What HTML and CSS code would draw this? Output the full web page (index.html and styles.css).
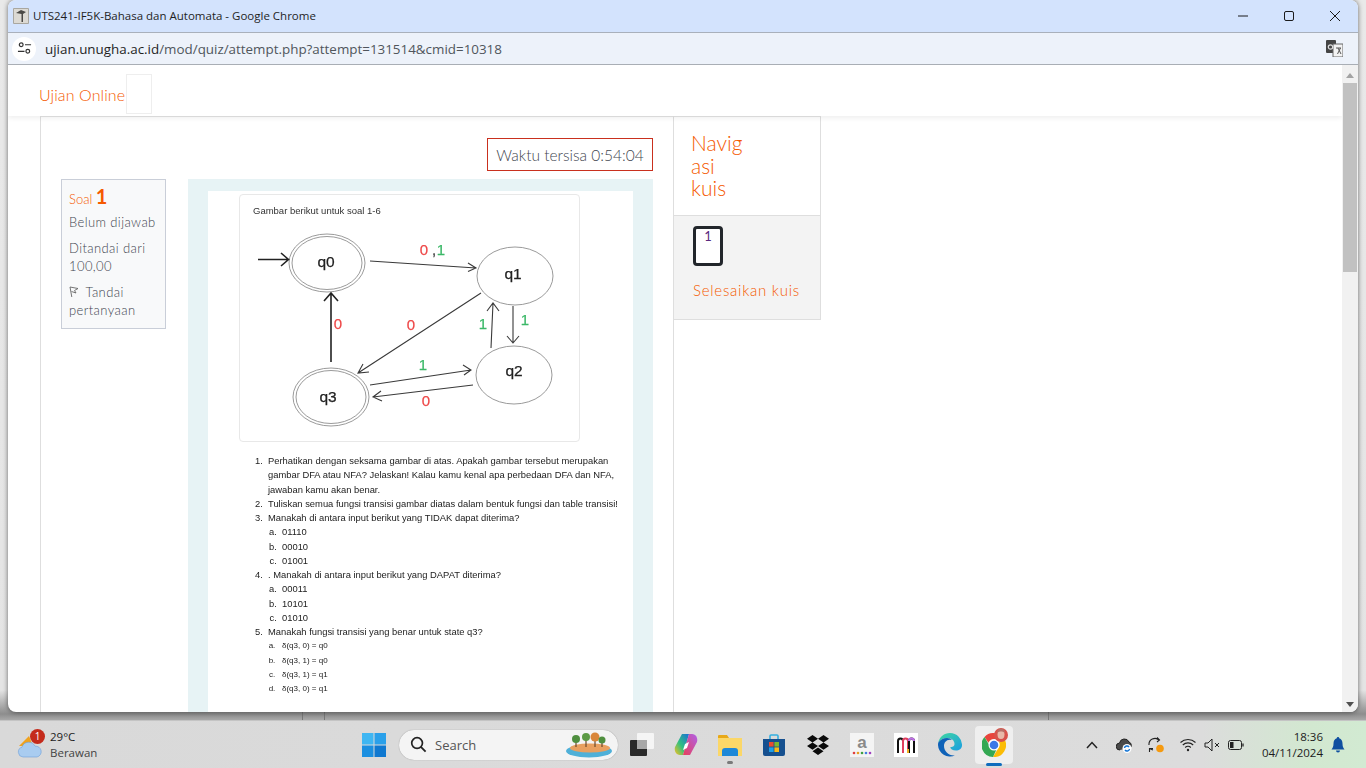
FILE: index.html
```html
<!DOCTYPE html>
<html lang="id">
<head>
<meta charset="utf-8">
<title>UTS241-IF5K-Bahasa dan Automata</title>
<link rel="stylesheet" href="styles.css">
</head>
<body>
<div class="desktop">
  <div class="desk-area">
    <i class="desk-line dl1"></i><i class="desk-line dl2"></i><i class="desk-line dl3"></i>
    <div class="window">
      <div class="titlebar">
        <svg class="favicon" viewBox="0 0 16 16"><rect width="16" height="16" rx="1" fill="#a9a7a0"/><rect x="1" y="1" width="14" height="14" fill="#dcdad4"/><path d="M3 5 8 2l5 2-3 2v8H8.500V6z" fill="#4a4946"/></svg>
        <span class="title-text">UTS241-IF5K-Bahasa dan Automata - Google Chrome</span>
        <div class="win-controls">
          <svg viewBox="0 0 12 12"><path d="M1 6h10" stroke="#1b1b1b" fill="none"/></svg>
          <svg viewBox="0 0 12 12"><rect x="1.500" y="1.500" width="9" height="9" rx="1.500" stroke="#1b1b1b" fill="none"/></svg>
          <svg viewBox="0 0 12 12"><path d="M1 1l10 10M11 1 1 11" stroke="#1b1b1b" fill="none"/></svg>
        </div>
      </div>
      <div class="addressbar">
        <span class="site-info"><svg viewBox="0 0 16 16"><circle cx="4.500" cy="4" r="2" fill="none" stroke="#333" stroke-width="1.300"/><path d="M8.500 4H15M1 11h7" stroke="#333" stroke-width="1.300"/><circle cx="11.500" cy="11" r="2" fill="none" stroke="#333" stroke-width="1.300"/></svg></span>
        <span class="url"><span class="url-host">ujian.unugha.ac.id</span>/mod/quiz/attempt.php?attempt=131514&amp;cmid=10318</span>
        <svg class="translate" viewBox="0 0 17 17"><rect x="0" y="0" width="10" height="13" rx="1" fill="#444"/><rect x="7" y="4" width="10" height="13" fill="#f2f2f2" stroke="#666"/><circle cx="4.500" cy="7" r="2.200" fill="none" stroke="#ddd" stroke-width="1.200"/><path d="M10 8h5M12 8l3 6M14.500 8l-3 6" stroke="#555" stroke-width="1" fill="none"/></svg>
      </div>
      <div class="viewport">
        <div class="page">
          <header class="site-header">
            <span class="brand">Ujian Online</span>
            <span class="brand-box"></span>
          </header>
          <main class="main">
            <section class="region">
              <div class="timer-row"><div class="timer">Waktu tersisa 0:54:04</div></div>
              <div class="question">
                <aside class="qinfo">
                  <div class="qno">Soal <b>1</b></div>
                  <p class="qstate">Belum dijawab</p>
                  <p class="qgrade">Ditandai dari 100,00</p>
                  <p class="qflag"><svg class="flag" viewBox="0 0 10 12"><path d="M1 1l8 1.500L5.500 4.500 7 7 2.500 5.500M1 1l1.800 10" fill="none" stroke="#666" stroke-width="0.900"/></svg> Tandai pertanyaan</p>
                </aside>
                <div class="qcontent">
                  <div class="qimage">
                    <div class="figure-card">
                      <span class="figure-cap">Gambar berikut untuk soal 1-6</span>
                      <svg class="diagram" viewBox="239 194 341 248">
                        <g class="state">
                          <ellipse cx="327" cy="263" rx="38" ry="29"/><ellipse cx="327" cy="263" rx="35" ry="26.500"/>
                          <ellipse cx="515" cy="276" rx="38" ry="29"/>
                          <ellipse cx="514" cy="375" rx="38" ry="29"/>
                          <ellipse cx="331" cy="397" rx="38" ry="29"/><ellipse cx="331" cy="397" rx="35" ry="26.500"/>
                        </g>
                        <g class="edge">
                          <path class="thick" d="M258 259.500h30M281 253l7.500 6.500-7.500 6.500"/>
                          <path d="M370 261l106 7M468 263l8 5-8 3.500"/>
                          <path d="M481 293 358 373M369 372l-11 1 5-9"/>
                          <path d="M513 306v37M507 336l6 7 6-7"/>
                          <path d="M491 348l2-45M487 311l6-8 6 8"/>
                          <path class="thick" d="M331 362v-69M324 301l7-8 7 8"/>
                          <path d="M370 385l101-15M463 365l8 5-7 5"/>
                          <path d="M473 385 373 397M381 391l-8 6 9 4"/>
                        </g>
                        <g class="state-label">
                          <text x="326" y="267">q0</text><text x="513" y="279">q1</text>
                          <text x="514" y="376">q2</text><text x="328" y="402">q3</text>
                        </g>
                        <g class="edge-label">
                          <text class="red" x="424" y="255">0</text><text class="dark" x="434" y="255">,</text><text class="green" x="441" y="255">1</text>
                          <text class="red" x="411" y="330">0</text><text class="red" x="338" y="329">0</text>
                          <text class="green" x="525" y="325">1</text><text class="green" x="483" y="329">1</text>
                          <text class="green" x="423" y="370">1</text><text class="red" x="426" y="406">0</text>
                        </g>
                      </svg>
                    </div>
                    <ol class="qlist">
                      <li>Perhatikan dengan seksama gambar di atas. Apakah gambar tersebut merupakan gambar DFA atau NFA? Jelaskan! Kalau kamu kenal apa perbedaan DFA dan NFA, jawaban kamu akan benar.</li>
                      <li>Tuliskan semua fungsi transisi gambar diatas dalam bentuk fungsi dan table transisi!</li>
                      <li>Manakah di antara input berikut yang TIDAK dapat diterima?
                        <ol class="sublist"><li>01110</li><li>00010</li><li>01001</li></ol></li>
                      <li>. Manakah di antara input berikut yang DAPAT diterima?
                        <ol class="sublist"><li>00011</li><li>10101</li><li>01010</li></ol></li>
                      <li>Manakah fungsi transisi yang benar untuk state q3?
                        <ol class="sublist small"><li>δ(q3, 0) = q0</li><li>δ(q3, 1) = q0</li><li>δ(q3, 1) = q1</li><li>δ(q3, 0) = q1</li></ol></li>
                    </ol>
                  </div>
                </div>
              </div>
            </section>
            <aside class="quiznav">
              <h2 class="nav-head">Navig<br>asi<br>kuis</h2>
              <div class="nav-body">
                <div class="nav-btn">1</div>
                <a class="nav-finish">Selesaikan kuis</a>
              </div>
            </aside>
          </main>
        </div>
        <div class="scrollbar">
          <span class="arrow-up"></span>
          <span class="thumb"></span>
          <span class="arrow-down"></span>
        </div>
      </div>
    </div>
  </div>
  <footer class="taskbar">
    <div class="weather">
      <span class="weather-icon">
        <svg viewBox="0 0 26 24"><path d="M2 11 12 1l4 10z" fill="#f0a21e"/><path d="M6 22a5 5 0 0 1-1-9.800 7 7 0 0 1 13-1 5.500 5.500 0 0 1 2 10.800z" fill="#a9ccf0" stroke="#6f9fd8" stroke-width=".6"/></svg>
        <span class="badge">1</span>
      </span>
      <span class="weather-text"><span class="temp">29°C</span><span class="cond">Berawan</span></span>
    </div>
    <div class="center">
      <svg class="startbtn" viewBox="0 0 24 24"><rect width="11.500" height="11.500" fill="#3fb6f2"/><rect x="12.500" width="11.500" height="11.500" fill="#2aa0ea"/><rect y="12.500" width="11.500" height="11.500" fill="#1b8fe0"/><rect x="12.500" y="12.500" width="11.500" height="11.500" fill="#0f78d0"/></svg>
      <div class="search">
        <svg class="search-glass" viewBox="0 0 18 18"><circle cx="7.500" cy="7.500" r="5.700" fill="none" stroke="#222" stroke-width="1.800"/><path d="M11.500 11.500 16.500 16.500" stroke="#222" stroke-width="2"/></svg>
        <span class="search-text">Search</span>
        <svg class="search-art" viewBox="0 0 46 26"><ellipse cx="23" cy="19" rx="23" ry="6.500" fill="#4fb0d8"/><ellipse cx="24" cy="16" rx="20" ry="4.500" fill="#e8a060"/><path d="M10 15V7M20 15V5M29 15V5M36 15V8" stroke="#6b4a2b" stroke-width="1.200"/><circle cx="10" cy="7" r="4" fill="#4f8f3f"/><circle cx="20" cy="5" r="4" fill="#5c9a45"/><circle cx="29" cy="5" r="4.500" fill="#d9863a"/><circle cx="36" cy="8" r="3.500" fill="#4f8f3f"/></svg>
      </div>
      <div class="apps">
        <span class="app"><svg viewBox="0 0 24 24"><rect x="7" y="0" width="17" height="16" rx="1" fill="#f5f5f5"/><rect x="0" y="7" width="17" height="16" rx="1" fill="#2a2a2a"/><rect x="7" y="7" width="10" height="9" fill="#a8a8a8"/></svg></span>
        <span class="app"><svg viewBox="0 0 24 24"><defs><linearGradient id="cpa" x1="0" y1="1" x2="1" y2="0"><stop offset="0" stop-color="#f8c020"/><stop offset=".45" stop-color="#30c080"/><stop offset="1" stop-color="#1b6fd8"/></linearGradient><linearGradient id="cpb" x1="0" y1="1" x2="1" y2="0"><stop offset="0" stop-color="#e8405a"/><stop offset="1" stop-color="#b060e8"/></linearGradient></defs><path d="M8 1h7l-6 21H6C2 22 0 18 1 14z" fill="url(#cpa)"/><path d="M16 22H9l6-21h3c4 0 6 4 5 8z" fill="url(#cpb)"/><path d="M11 11l4-2-2 6-4 2z" fill="#fff"/></svg></span>
        <span class="app has-dot"><svg viewBox="0 0 24 24"><path d="M0 3a1 1 0 0 1 1-1h8l2 3h13v18H0z" fill="#e8a818"/><rect y="5" width="24" height="18" fill="#fbd768"/><path d="M4 23v-5a3 3 0 0 1 3-3h10a3 3 0 0 1 3 3v5z" fill="#1d88d8"/></svg></span>
        <span class="app"><svg viewBox="0 0 24 24"><path d="M8 7V3a1 1 0 0 1 1-1h6a1 1 0 0 1 1 1v4" fill="none" stroke="#34b0e0" stroke-width="1.600"/><path d="M1 6h22v15a2 2 0 0 1-2 2H3a2 2 0 0 1-2-2z" fill="#16508f"/><rect x="7" y="9" width="4.600" height="4.600" fill="#e84c30"/><rect x="12.400" y="9" width="4.600" height="4.600" fill="#7cb82f"/><rect x="7" y="14.400" width="4.600" height="4.600" fill="#1ea0e8"/><rect x="12.400" y="14.400" width="4.600" height="4.600" fill="#f8b818"/></svg></span>
        <span class="app"><svg viewBox="0 0 24 24"><path d="M6.500 2 12 5.700 6.500 9.400 1 5.700zM17.500 2 23 5.700l-5.500 3.700L12 5.700zM6.500 9.400 12 13.100l-5.500 3.700L1 13.100zM17.500 9.400 23 13.100l-5.500 3.700L12 13.100zM12 14.500l5.500 3.700L12 22l-5.500-3.800z" fill="#0a0a0a"/></svg></span>
        <span class="app"><svg viewBox="0 0 24 24"><rect width="24" height="24" fill="#f4f4f4"/><text class="amazon-a" x="12" y="15">a</text><circle cx="4" cy="20" r="1.300" fill="#e04040"/><circle cx="8" cy="20" r="1.300" fill="#e8a020"/><circle cx="12" cy="20" r="1.300" fill="#40a040"/><circle cx="16" cy="20" r="1.300" fill="#4080e0"/><circle cx="20" cy="20" r="1.300" fill="#a040c0"/></svg></span>
        <span class="app"><svg viewBox="0 0 24 24"><rect width="24" height="24" fill="#fff"/><path d="M4 20V8a2.500 2.500 0 0 1 5 0v12" fill="none" stroke="#111" stroke-width="2"/><path d="M9 20V8a2.500 2.500 0 0 1 5 0v8" fill="none" stroke="#e04060" stroke-width="2"/><path d="M15 20V8a2.500 2.500 0 0 1 5 0v12" fill="none" stroke="#111" stroke-width="2"/><path d="M15 8a2.500 2.500 0 0 1 5 0" fill="none" stroke="#c070e8" stroke-width="2"/><path d="M14 16v4" stroke="#f0b020" stroke-width="2"/></svg></span>
        <span class="app"><svg viewBox="0 0 24 24"><defs><linearGradient id="edg" x1="0" y1="0" x2="1" y2="1"><stop offset="0" stop-color="#40d8a0"/><stop offset="1" stop-color="#1b9de2"/></linearGradient></defs><path d="M12 0a12 12 0 0 1 12 12.500c0 3-3 5-6 5-4 0-6-2-5.500-3.500 2 .5 4-1 4-3C16.500 7 13 5 9 5 5.500 5 2 7 .3 9.500 1.500 4 6 0 12 0z" fill="url(#edg)"/><path d="M.3 9.500C2 7 5.500 5 9 5c2 0 4 .7 5 2-5-1.500-8 2-8 6 0 5 4.500 10 11 9.500A12 12 0 0 1 0 12c0-.9.100-1.700.3-2.500z" fill="#0f62b8"/></svg></span>
        <span class="app active"><svg viewBox="0 0 24 24"><path d="M12 0a12 12 0 0 1 10.400 6H12a6 6 0 0 0-5.600 3.800L2.500 4A12 12 0 0 1 12 0z" fill="#e8453c"/><path d="M22.400 6A12 12 0 0 1 11 24l5.200-8.800A6 6 0 0 0 17 9z" fill="#fbbc05"/><path d="M2.500 4l4.700 8a6 6 0 0 0 7 5L11 24A12 12 0 0 1 2.500 4z" fill="#34a853"/><circle cx="12" cy="12" r="5.500" fill="#fff"/><circle cx="12" cy="12" r="4.300" fill="#3b78e7"/></svg><span class="avatar"><svg viewBox="0 0 14 14"><circle cx="7" cy="7" r="7" fill="#d8524a"/><ellipse cx="7" cy="6.500" rx="3.500" ry="4.500" fill="#e8b8a8"/><path d="M3 5c0-6 8-6 8 0-2-2-6-2-8 0z" fill="#b87068"/></svg></span></span>
      </div>
    </div>
    <div class="tray">
      <svg class="tray-chevron" viewBox="0 0 12 8"><path d="M1 7l5-5.500L11 7" fill="none" stroke="#222" stroke-width="1.500"/></svg>
      <svg class="tray-icon" viewBox="0 0 16 16"><path d="M4 13a3.500 3.500 0 0 1-.5-7A5 5 0 0 1 13 5a3.500 3.500 0 0 1 1 6" fill="#4a4a4a" stroke="#222"/><circle cx="11" cy="11.500" r="4.500" fill="#fff"/><path d="M8.500 11a2.500 2.500 0 0 1 4.500-1M13.500 12a2.500 2.500 0 0 1-4.500 1" fill="none" stroke="#1173d4" stroke-width="1.400"/></svg>
      <svg class="tray-icon sync" viewBox="0 0 16 16"><path d="M1 8a6 6 0 0 1 10-5M9 .5 11.500 3 9 5" fill="none" stroke="#222" stroke-width="1.100"/><path d="M1.500 11.500 5 13M1.500 15v-3.500H5" fill="none" stroke="#222" stroke-width="1.100"/><circle cx="12" cy="11.500" r="3.800" fill="#f59a10"/></svg>
      <svg class="tray-icon" viewBox="0 0 16 16"><path d="M.5 5.500a11 11 0 0 1 15 0M2.800 8a7.500 7.500 0 0 1 10.400 0M5.200 10.500a4 4 0 0 1 5.600 0" fill="none" stroke="#222" stroke-width="1.100"/><circle cx="8" cy="13" r="1.200" fill="#222"/></svg>
      <svg class="tray-icon" viewBox="0 0 16 16"><path d="M1 6h3l4-4v12l-4-4H1z" fill="none" stroke="#222"/><path d="M11 6l4 4M15 6l-4 4" stroke="#222"/></svg>
      <svg class="tray-icon" viewBox="0 0 16 16"><rect x=".5" y="3.500" width="13" height="9" rx="2" fill="none" stroke="#222"/><rect x="2" y="5" width="3.500" height="6" fill="#222"/><path d="M15 6.500v3" stroke="#222" stroke-width="1.300"/></svg>
      <div class="clock"><span>18:36</span><span>04/11/2024</span></div>
      <svg class="bell" viewBox="0 0 14 16"><path d="M7 0a1.200 1.200 0 0 1 1.200 1.300C10.500 2 11.500 4 11.500 6.500c0 3 .7 4.500 2 6H.5c1.300-1.500 2-3 2-6C2.500 4 3.500 2 5.800 1.300A1.200 1.200 0 0 1 7 0z" fill="#0f4fa0"/><path d="M5 13.500h4a2 2 0 0 1-4 0z" fill="#0f4fa0"/></svg>
    </div>
  </footer>
</div>
</body>
</html>
```

FILE: styles.css
```css
* { box-sizing: border-box; }
html, body { margin: 0; height: 100%; overflow: hidden; }
body { font-family: "Lato", "Liberation Sans", sans-serif; font-weight: 300; }
p, h2, ol { margin: 0; padding: 0; }

.desktop { width: 1366px; height: 768px; display: flex; flex-direction: column; background: #e6e6e6; }
.desk-area { position: relative; flex: 1; background: linear-gradient(to bottom, #e9e9e9 0, #e4e4e4 690px, #8d8d8d 714px, #a8a8a8 720px); }
.desk-line { position: absolute; top: 712px; width: 1px; height: 8px; background: #777; }
.dl1 { left: 302px; }
.dl2 { left: 324px; }
.dl3 { left: 1048px; }

.window { position: absolute; left: 8px; top: 0; width: 1350px; height: 712px; display: flex; flex-direction: column; background: #fff; border-radius: 8px; overflow: hidden; box-shadow: 0 0 5px rgba(0,0,0,.55); }

.titlebar { height: 32px; flex: none; display: flex; align-items: center; padding: 0 0 1px 5px; background: #d3e3fd; font-family: "Open Sans", "Liberation Sans", sans-serif; font-weight: 400; }
.favicon { width: 16px; height: 16px; }
.title-text { margin-left: 4px; font-size: 11.5px; color: #1f1f1f; }
.win-controls { margin-left: auto; display: flex; gap: 34px; padding-right: 17px; }
.win-controls svg { width: 12px; height: 12px; }

.addressbar { height: 33px; flex: none; display: flex; align-items: center; padding: 0 15px 0 4px; background: #edf2fa; border-top: 1px solid #a9b0bb; border-bottom: 1px solid #a9aeb5; font-family: "Open Sans", "Liberation Sans", sans-serif; font-weight: 400; }
.site-info { width: 24px; height: 24px; border-radius: 50%; background: #fff; display: flex; align-items: center; justify-content: center; }
.site-info svg { width: 15px; height: 15px; }
.url { margin-left: 9px; font-size: 13.4px; color: #50565c; white-space: nowrap; }
.url-host { color: #1f1f1f; }
.translate { margin-left: auto; width: 17px; height: 17px; }

.viewport { flex: 1; min-height: 0; display: flex; }
.page { flex: 1; min-width: 0; overflow: hidden; }

.site-header { position: relative; height: 51px; display: flex; align-items: flex-start; padding: 9px 0 0 31px; background: #fff; box-shadow: 0 2px 5px rgba(0,0,0,.07); z-index: 1; }
.brand { margin-top: 11px; font-size: 16px; line-height: 20px; letter-spacing: .1px; color: #f55a00; }
.brand-box { margin-left: 1px; width: 26px; height: 40px; border: 1px solid #eee; }

.main { display: flex; align-items: flex-start; padding-left: 32px; }
.region { width: 634px; height: 620px; flex: none; padding: 21px 20px 0 20px; border-left: 1px solid #dedede; border-right: 1px solid #dedede; border-top: 1px solid #e4e4e4; }
.timer-row { display: flex; justify-content: flex-end; }
.timer { height: 33px; width: 166px; display: flex; align-items: center; justify-content: center; border: 1px solid #c9301e; font-size: 15.5px; color: #3f4750; white-space: nowrap; }

.question { display: flex; align-items: flex-start; gap: 22px; margin-top: 8px; }
.qinfo { width: 105px; height: 150px; flex: none; padding: 4px 7px; background: #f8f9fa; border: 1px solid #c9ced8; font-size: 13px; line-height: 18px; letter-spacing: .4px; color: #3f4550; }
.qno { height: 24px; color: #f55a00; font-size: 13px; line-height: 24px; letter-spacing: 0; }
.qno b { font-size: 20px; font-weight: 700; }
.qstate { margin-top: 5px; }
.qgrade { margin-top: 8px; }
.qflag { margin-top: 8px; }
.flag { width: 10px; height: 12px; margin-right: 3px; vertical-align: -1px; }

.qcontent { width: 465px; height: 540px; flex: none; padding: 12px 20px 0; background: #e7f3f5; }
.qimage { height: 528px; padding: 3px 0 0 31px; background: #fff; filter: blur(.4px); }
.figure-card { position: relative; width: 341px; height: 248px; border: 1px solid #e8e8e8; border-radius: 4px; }
.figure-cap { position: absolute; left: 13px; top: 10px; font: 400 9.5px/12px "Liberation Sans", sans-serif; color: #333; white-space: nowrap; }
.diagram { position: absolute; left: -1px; top: -1px; width: 341px; height: 248px; }
.state ellipse { fill: none; stroke: #8f8f8f; stroke-width: .9; }
.edge path { fill: none; stroke: #3a3a3a; stroke-width: 1.1; }
.edge path.thick { stroke: #222; stroke-width: 1.6; }
.state-label text { font: 400 15.5px "Liberation Sans", sans-serif; fill: #222; stroke: #222; stroke-width: .25; text-anchor: middle; }
.edge-label text { font: 400 15px "Liberation Sans", sans-serif; text-anchor: middle; stroke-width: .25; }
.edge-label .red { fill: #ee4848; stroke: #ee4848; }
.edge-label .green { fill: #3cb868; stroke: #3cb868; }
.edge-label .dark { fill: #444; stroke: #444; }

.qlist { margin-top: 12px; padding-left: 29px; width: 386px; list-style: decimal; font: 400 9.4px/14.25px "Liberation Sans", sans-serif; color: #222; }
.qlist > li::marker { content: counter(list-item) ".\00a0\00a0"; }
.sublist { padding-left: 14px; list-style: lower-alpha; width: auto; }
.sublist > li::marker { content: counter(list-item, lower-alpha) ".\00a0\00a0"; }
.sublist.small { font-size: 8px; }
.sublist.small > li::marker { content: counter(list-item, lower-alpha) ".\00a0\00a0\00a0"; }

.quiznav { width: 147px; flex: none; }
.nav-head { height: 99px; padding: 15px 0 0 17px; border-top: 1px solid #e4e4e4; border-right: 1px solid #dedede; font-size: 21px; line-height: 22.5px; font-weight: 300; color: #f55a00; }
.nav-body { height: 105px; padding: 10px 0 0 19px; background: #f3f3f3; border: solid #dedede; border-width: 1px 1px 1px 0; }
.nav-btn { width: 30px; height: 40px; border: 3px solid #22262b; border-radius: 4px; text-align: center; font-size: 13px; line-height: 15px; font-weight: 400; color: #5a2a80; background: #fff; }
.nav-finish { display: block; margin-top: 14px; font-size: 15px; line-height: 20px; letter-spacing: .75px; color: #f55a00; white-space: nowrap; }

.scrollbar { width: 16px; flex: none; position: relative; display: flex; flex-direction: column; align-items: center; background: #f1f1f1; }
.arrow-up { margin-top: 8px; border: 4px solid transparent; border-top: 0; border-bottom: 5px solid #a3a3a3; }
.thumb { margin-top: 5px; width: 14px; height: 189px; background: #c1c1c1; }
.arrow-down { margin-top: auto; margin-bottom: 5px; border: 4px solid transparent; border-bottom: 0; border-top: 5px solid #505050; }

.taskbar { height: 48px; flex: none; display: flex; align-items: center; background: linear-gradient(to right, #d9d9d9 0, #dcdcdc 88%, #d2e8d0 96%, #d2ead2 100%); border-top: 1px solid #c4c4c4; font-family: "Open Sans", "Liberation Sans", sans-serif; font-weight: 400; color: #1c1c1c; }
.weather { width: 362px; flex: none; display: flex; align-items: center; padding-left: 17px; }
.weather-icon { position: relative; width: 26px; height: 24px; display: block; margin-top: 5px; }
.weather-icon svg { width: 26px; height: 24px; display: block; }
.badge { position: absolute; left: 13px; top: -6px; width: 15px; height: 15px; border-radius: 50%; background: #c42b1c; color: #fff; font-size: 10px; line-height: 15px; text-align: center; }
.weather-text { margin-left: 7px; display: flex; flex-direction: column; font-size: 11.5px; line-height: 16px; }
.cond { color: #444; }

.center { display: flex; align-items: center; flex: none; }
.startbtn { width: 24px; height: 24px; }
.search { width: 219px; height: 30px; margin-left: 13px; display: flex; align-items: center; padding: 0 6px 0 11px; border-radius: 15px; background: #f4f4f4; box-shadow: 0 0 1px rgba(0,0,0,.4); }
.search-glass { width: 17px; height: 17px; }
.search-text { margin-left: 8px; font-size: 13px; color: #555; }
.search-art { margin-left: auto; width: 46px; height: 26px; }
.apps { display: flex; gap: 20px; margin-left: 12px; }
.app { position: relative; display: block; width: 24px; height: 24px; }
.app > svg { display: block; width: 24px; height: 24px; }
.has-dot::after { content: ""; position: absolute; left: 9px; top: 28px; width: 6px; height: 3px; border-radius: 2px; background: #7a7a7a; }
.active::before { content: ""; position: absolute; left: -7px; top: -7px; width: 38px; height: 38px; border-radius: 4px; background: rgba(255,255,255,.55); }
.active::after { content: ""; position: absolute; left: 4px; top: 30px; width: 16px; height: 3px; border-radius: 2px; background: #0f6cbd; }
.active > svg { position: relative; }
.avatar { position: absolute; left: 12px; top: -5px; width: 14px; height: 14px; }
.avatar svg { display: block; width: 14px; height: 14px; }
.amazon-a { font: 700 17px "Liberation Sans", sans-serif; fill: #8a8a8a; text-anchor: middle; }

.tray { margin-left: auto; display: flex; align-items: center; padding-right: 21px; }
.tray-chevron { width: 12px; height: 8px; margin-right: 18px; }
.tray-icon { width: 16px; height: 16px; margin-right: 8px; }
.tray-icon:nth-child(2), .tray-icon.sync { margin-right: 16px; }
.clock { width: 71px; display: flex; flex-direction: column; align-items: flex-end; font-size: 11.5px; line-height: 16px; }
.bell { width: 14px; height: 16px; margin-left: 8px; }
```
